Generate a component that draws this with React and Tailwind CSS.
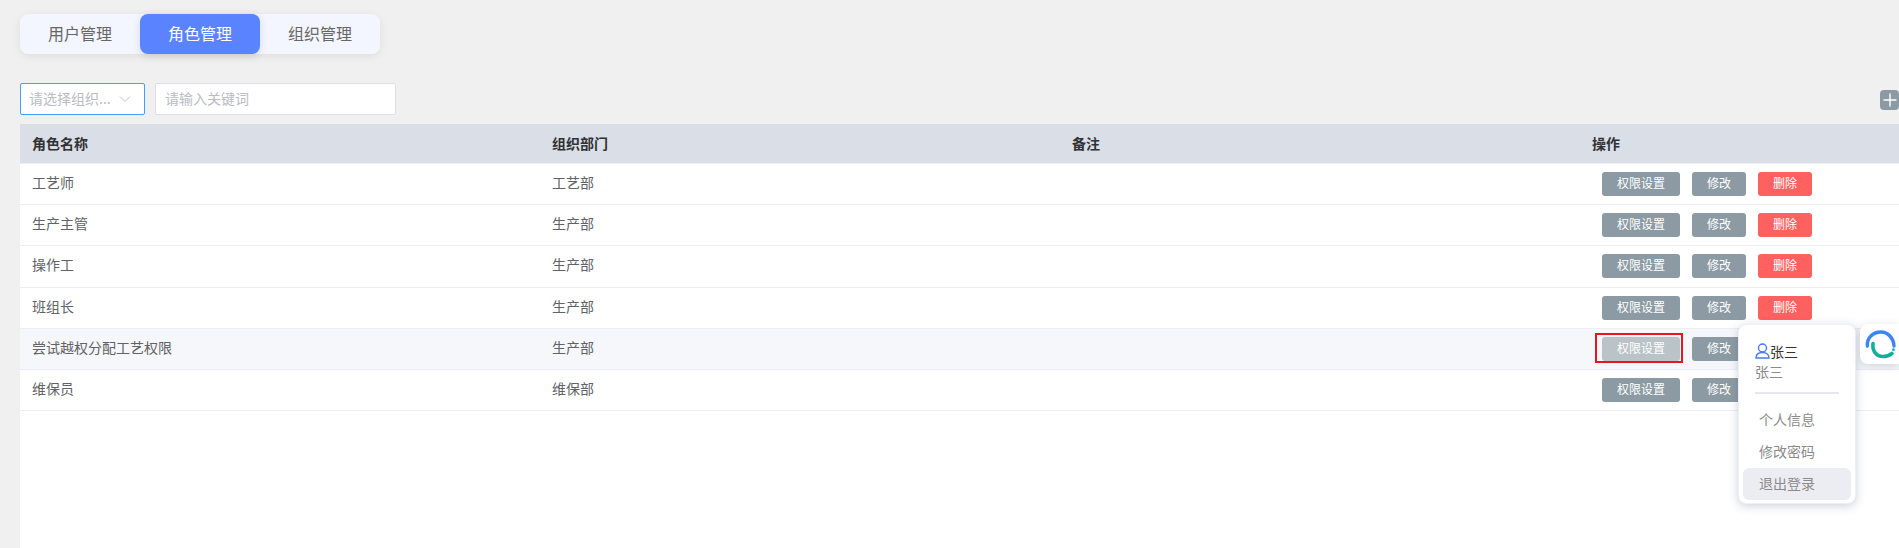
import React from "react";

const rows = [
  { name: "工艺师", dept: "工艺部" },
  { name: "生产主管", dept: "生产部" },
  { name: "操作工", dept: "生产部" },
  { name: "班组长", dept: "生产部" },
  { name: "尝试越权分配工艺权限", dept: "生产部", hover: true },
  { name: "维保员", dept: "维保部" },
];

const Btn = ({ children, className }) => (
  <button className={`flex h-6 items-center justify-center rounded-[3px] text-xs text-white ${className}`}>
    {children}
  </button>
);

const Logo = () => (
  <svg width="32" height="30" viewBox="0 0 32 30" fill="none">
    <path d="M3.4 17C2.5 9 9 3 17 3C24 3 29.5 9 30 17" stroke="#3d85f5" strokeWidth="3.4" strokeLinecap="round" />
    <path d="M9 14.5C8 22 12.5 27.5 19 27.5C22.5 27.5 25.5 26.5 28 24.5" stroke="#12b09a" strokeWidth="3.6" strokeLinecap="round" />
    <circle cx="29.5" cy="20.5" r="1.5" fill="#22b8c8" />
  </svg>
);

const App = () => {
  return (
    <div className="relative h-[548px] w-[1899px] overflow-hidden bg-[#f0f0f0] pl-5 pt-[14px] font-['Noto_Sans_CJK_SC',sans-serif]">
      <div className="flex h-10 w-[360px] rounded-lg bg-[#f3f6fe] text-base text-[#666] shadow-[0_2px_8px_rgba(0,0,0,0.08)]">
        <div className="flex w-[120px] items-center justify-center pb-0.5">用户管理</div>
        <div className="flex w-[120px] items-center justify-center rounded-lg bg-[#5a84ff] pb-0.5 text-white shadow-[0_2px_8px_rgba(0,0,0,0.12)]">角色管理</div>
        <div className="flex w-[120px] items-center justify-center pb-0.5">组织管理</div>
      </div>

      <div className="mt-[29px] flex h-8 items-center gap-[10px]">
        <div className="flex h-8 w-[125px] items-center justify-between rounded-[2px] border border-[#409eff] bg-white pb-0.5 pl-[8px] pr-[13px] text-sm text-[#b8bcc4]">
          <span className="whitespace-nowrap">请选择组织...</span>
          <svg width="12" height="12" viewBox="0 0 12 12" fill="none" stroke="#c0c4cc" strokeWidth="1" className="mt-0.5 shrink-0">
            <path d="M1 3.5L6 8.5L11 3.5" />
          </svg>
        </div>
        <div className="flex h-8 w-[241px] items-center rounded-[2px] border border-[#dcdfe6] bg-white pb-0.5 pl-[9px] text-sm text-[#b8bcc4]">
          请输入关键词
        </div>
        <button className="absolute right-0 top-[90px] flex h-[20px] w-[19px] items-center justify-center rounded-[4px] bg-[#8c9ba3]">
          <svg width="14" height="14" viewBox="0 0 14 14" stroke="white" strokeWidth="1.4">
            <path d="M7 0.5V13.5M0.5 7H13.5" />
          </svg>
        </button>
      </div>

      <div className="mt-[9px] h-[500px] bg-white text-sm text-[#606266]">
        <div className="grid h-10 grid-cols-[520px_520px_520px_1fr] items-center border-b border-[#ebeef5] bg-[#dadee7] pb-0.5 font-semibold text-[#303133]">
          <div className="pl-3">角色名称</div>
          <div className="pl-3">组织部门</div>
          <div className="pl-3">备注</div>
          <div className="pl-3">操作</div>
        </div>
        {rows.map((row) => (
          <div
            key={row.name}
            className={`grid h-[41.2px] grid-cols-[520px_520px_520px_1fr] items-center border-b border-[#ebeef5] ${row.hover ? "bg-[#f5f7fa]" : ""}`}
          >
            <div className="pb-1 pl-3">{row.name}</div>
            <div className="pb-1 pl-3">{row.dept}</div>
            <div />
            <div className="flex gap-3 pl-[22px]">
              <Btn className={`w-[78px] pb-0.5 ${row.hover ? "bg-[#bac3c8]" : "bg-[#8c9ba3]"}`}>权限设置</Btn>
              <Btn className="w-[54px] bg-[#8c9ba3] pb-0.5">修改</Btn>
              <Btn className="w-[54px] bg-[#ff6060] pb-0.5">删除</Btn>
            </div>
          </div>
        ))}
      </div>

      {/* red highlight around the hovered button */}
      <div className="absolute left-[1595px] top-[333px] h-[30px] w-[88px] border-2 border-[#e8141e]" />

      <div className="absolute left-[1738px] top-[324px] h-[180px] w-[118px] rounded-lg border border-[#eef0f5] bg-white px-1 text-sm text-[#8a8a8a] shadow-[0_2px_10px_rgba(60,70,110,0.25)]">
        <div className="mt-[16px] flex h-5 items-center pl-[12px] text-[#333]">
          <svg width="15" height="16" viewBox="0 0 15 16" fill="none" stroke="#4a78f0" strokeWidth="1.4" className="shrink-0">
            <circle cx="7.5" cy="5" r="4" />
            <path d="M1 15C1 11.5 3.5 9.5 7.5 9.5C11.5 9.5 14 11.5 14 15Z" />
          </svg>
          <span className="whitespace-nowrap">张三</span>
        </div>
        <div className="flex h-5 items-center pl-[12px]">张三</div>
        <div className="mx-3 mt-[11px] h-0.5 bg-[#e4e7ed]" />
        <div className="mt-[10px] flex h-8 items-center rounded-md pb-0.5 pl-4">个人信息</div>
        <div className="flex h-8 items-center rounded-md pb-0.5 pl-4">修改密码</div>
        <div className="flex h-8 items-center rounded-md bg-[#ecedf2] pb-0.5 pl-4">退出登录</div>
      </div>

      <div className="absolute left-[1860px] top-[324px] flex h-10 w-[39px] items-center justify-center rounded-l-lg bg-white shadow-[0_2px_8px_rgba(60,70,110,0.2)]">
        <Logo />
      </div>
    </div>
  );
};

export default App;
